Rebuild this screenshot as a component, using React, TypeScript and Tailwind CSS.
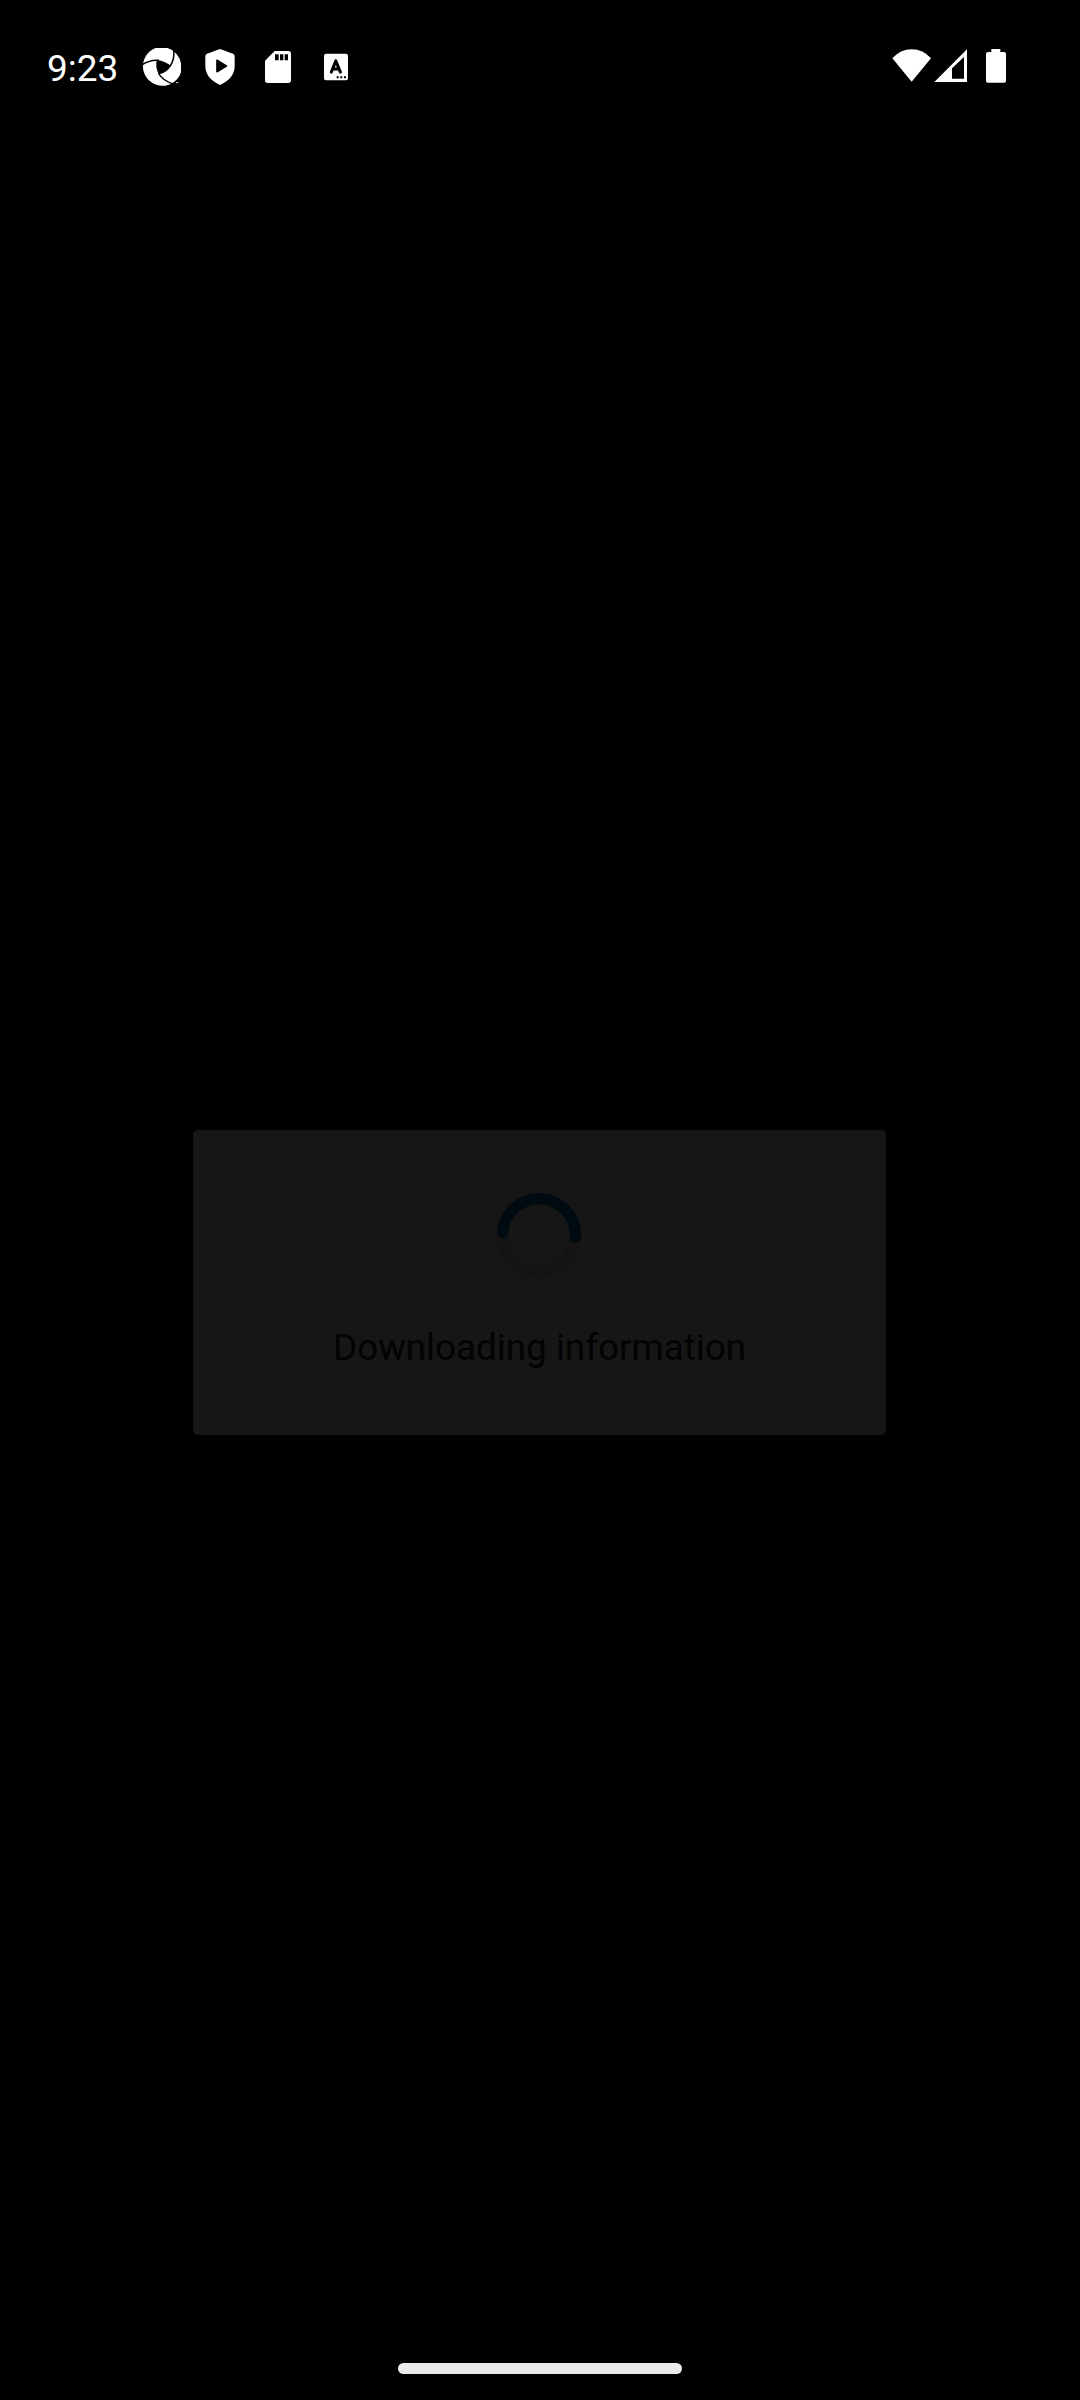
function ApertureIcon() {
  return (
    <svg className="ml-[22px] h-10 w-10" viewBox="0 0 120 120">
      <path d="M41 3H77A58 58 0 0 1 117 50V76A58.500 58.500 0 1 1 41 3Z" fill="#fff" />
      <path d="M45 38Q69 42 87 56Q76 76 51 82Q38 60 45 38Z" fill="#000" />
      <g fill="none" stroke="#000" strokeWidth="4.500">
        <path d="M84 58Q99 36 95 8" />
        <path d="M50 40Q22 38 0 54" />
        <path d="M49 78Q62 102 97 112" />
      </g>
      <path d="M102 107H109" stroke="#ddd" strokeWidth="3" />
    </svg>
  );
}

function ShieldIcon() {
  return (
    <svg className="ml-[23px] h-[38px] w-[30px]" viewBox="0 0 90 114">
      <path d="M45 3L84 17Q89 19 89 25V57Q87 92 45 111Q3 92 1 57V25Q1 19 6 17Z" fill="#fff" />
      <path d="M36 37L64 54L36 71Z" fill="#000" stroke="#000" strokeWidth="5" strokeLinejoin="round" />
    </svg>
  );
}

function SdCardIcon() {
  return (
    <svg className="ml-[30px] h-8 w-[26px]" viewBox="0 0 78 96">
      <path d="M29 0H70Q78 0 78 8V88Q78 96 70 96H8Q0 96 0 88V29Z" fill="#fff" />
      <path d="M30 10H41V28H30ZM45 10H55V28H45ZM59 10H69V28H59Z" fill="#000" />
    </svg>
  );
}

function LetterIcon() {
  return (
    <svg className="ml-[33px] h-7 w-6" viewBox="0 0 72 84">
      <rect x="0" y="2" width="72" height="80" rx="6" fill="#fff" />
      <path d="M22 57L35.500 24L49 57M27 48H44" fill="none" stroke="#000" strokeWidth="9.500" strokeLinejoin="round" strokeLinecap="round" />
      <path d="M38 70H44V76H38ZM49 70H55V76H49ZM60 70H66V76H60Z" fill="#000" />
    </svg>
  );
}

function StatusBar() {
  return (
    <header className="flex h-[134px] items-center pr-[74px] pl-[47px] text-white">
      <span className="relative top-[1px] w-[73px] text-[37px] leading-none whitespace-nowrap">9:23</span>
      <ApertureIcon />
      <ShieldIcon />
      <SdCardIcon />
      <LetterIcon />
      <div className="mb-[2px] ml-auto flex items-center">
        <svg className="h-[34px] w-10" viewBox="0 0 120 102">
          <path d="M1 28Q25 1 59 1T117 28L59 98Z" fill="#fff" />
        </svg>
        <svg className="ml-[2px] h-[34px] w-[33px]" viewBox="0 0 99 102">
          <path d="M1 99L99 1V99ZM54 58V89H90V24Z" fill="#fff" fillRule="evenodd" />
        </svg>
        <svg className="ml-[19px] h-[34px] w-5" viewBox="0 0 60 102">
          <path d="M16 0H43V9H54Q60 9 60 15V95Q60 101 54 101H6Q0 101 0 95V15Q0 9 6 9H16Z" fill="#fff" />
        </svg>
      </div>
    </header>
  );
}

function LoadingCard() {
  return (
    <section className="mt-[996px] ml-[193px] flex h-[305px] w-[693px] flex-col items-center rounded-[5px] bg-[#161616]">
      <svg className="mt-[63px] mr-[1px] h-[84px] w-[84px]" viewBox="0 0 84 84" fill="none">
        <circle cx="42" cy="42" r="36.5" stroke="#141414" strokeWidth="11" />
        <path d="M5.590 39.450A36.500 36.500 0 0 1 78.410 44.550" stroke="#000a11" strokeWidth="11" strokeLinecap="round" />
      </svg>
      <p className="mt-[49px] text-[36.8px] leading-[43px] whitespace-nowrap text-[#030303]">Downloading information</p>
    </section>
  );
}

export default function App() {
  return (
    <main className="flex h-[2400px] w-[1080px] flex-col overflow-hidden bg-black font-['Roboto',sans-serif]">
      <StatusBar />
      <LoadingCard />
      <div className="mx-auto mt-auto mb-[26px] h-[11px] w-[284px] rounded-full bg-[#ebebeb]" />
    </main>
  );
}
